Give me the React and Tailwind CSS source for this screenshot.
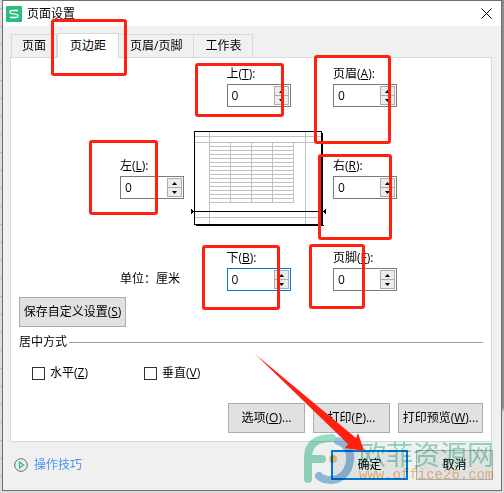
import React from 'react';

/**
 * Single margin field: label with access key, text box and spin buttons
 */
const MarginField = ({ id, label, accessKey, active = false }) => (
  <div className="w-16 justify-self-center">
    <label htmlFor={id} className="block h-[18px] leading-4 whitespace-nowrap">
      {label}(<u>{accessKey}</u>):
    </label>
    <div className={`flex h-[23px] border bg-white pr-px ${active ? 'border-[#0078d7]' : 'border-[#7a7a7a]'}`}>
      <input id={id} type="text" defaultValue="0" className="w-0 min-w-0 flex-1 pl-1 outline-none" />
      <div className="flex flex-col w-[15px] py-px">
        <button type="button" aria-label="增加" className="flex flex-1 items-center justify-center border border-[#acacac] bg-[#ececec]">
          <svg width="5" height="3" viewBox="0 0 5 3"><path d="M2.5 0 5 3H0z" /></svg>
        </button>
        <button type="button" aria-label="减少" className="flex flex-1 items-center justify-center border border-t-0 border-[#acacac] bg-[#ececec]">
          <svg width="5" height="3" viewBox="0 0 5 3"><path d="M0 0h5L2.5 3z" /></svg>
        </button>
      </div>
    </div>
  </div>
);

const DialogButton = ({ children, className = 'w-[77px]', primary = false }) => (
  <button
    type="button"
    className={`h-[30px] whitespace-nowrap bg-[#e1e1e1] ${primary ? 'border-2 border-[#0078d7]' : 'border border-[#adadad]'} ${className}`}
  >
    {children}
  </button>
);

const CheckOption = ({ id, label, accessKey }) => (
  <div className="flex w-28 items-center gap-[5px]">
    <input id={id} type="checkbox" className="size-[13px] appearance-none border border-[#333] bg-white checked:bg-[#0078d7]" />
    <label htmlFor={id}>{label}(<u>{accessKey}</u>)</label>
  </div>
);

/**
 * Small drawing of a sheet with its margin guides
 */
const PagePreview = () => {
  const rows = Array.from({ length: 16 }, (_, i) => 11 + i * 4);
  const cols = [18, 39, 60, 81, 102];

  return (
    <svg width="135" height="95" viewBox="0 0 135 95" shapeRendering="crispEdges" className="justify-self-center">
      <path d="M5 94.5h128M131.5 2v93" stroke="#000" />
      <rect x="3.5" y="0.5" width="127" height="93" fill="#fff" stroke="#000" />
      <g stroke="#c0c0c0">
        <path d="M4 5.5h126M4 11.5h126M4 86.5h126M18.5 1v92M114.5 1v92" />
        {rows.map((y) => <path key={y} d={`M18 ${y + 0.5}h85`} />)}
        {cols.map((x) => <path key={x} d={`M${x + 0.5} 11v61`} />)}
      </g>
      <path d="M0 80.5h135" stroke="#000" />
      <path d="M0 78h1v1h1v3h-1v1h-1zM135 78h-1v1h-1v3h1v1h1z" />
    </svg>
  );
};

const Watermark = () => (
  <div className="pointer-events-none absolute top-[433px] left-[303px] flex mix-blend-multiply opacity-60">
    <svg width="52" height="52" viewBox="0 0 52 52" fill="none" strokeLinecap="round">
      <path d="M29 5C12 5 5 12 5 25v21M6 26h13" stroke="#4fc79a" strokeWidth="8" />
      <path d="M35 8c9 3 13 11 12 19-1 12-9 20-19 20-5 0-9-1-12-4" stroke="#4a9bd0" strokeWidth="8" />
      <circle cx="30" cy="26" r="4" fill="#f2a13c" />
    </svg>
    <div className="pt-2 pl-1">
      <div className="h-[26px] text-[27px] leading-[28px] whitespace-nowrap text-[#4fc79a]">欧菲资源网</div>
      <div className="font-['Liberation_Mono',monospace] text-[14px] leading-4 text-[#f09a38]">www.office26.com</div>
    </div>
  </div>
);

/** Red marker frames drawn on top of the dialog */
const MARKS = [
  'top-[19px] left-[51px] w-[76px] h-[57px]',
  'top-[63px] left-[195px] w-[89px] h-[54px]',
  'top-[55px] left-[314px] w-[77px] h-[89px]',
  'top-[140px] left-[89px] w-[69px] h-[75px]',
  'top-[154px] left-[318px] w-[74px] h-[86px]',
  'top-[245px] left-[202px] w-[78px] h-[65px]',
  'top-[244px] left-[309px] w-[56px] h-[65px]',
];

const TABS = ['页面', '页边距', '页眉/页脚', '工作表'];

const App = () => {
  return (
    <div className="relative flex min-h-screen bg-[#dcdce0] bg-[repeating-linear-gradient(#dcdce0_0px_8px,#b4b4cc_8px_9px,#dcdce0_9px_18px)] pb-[2px] pl-[2px] font-['Open_Sans','Noto_Sans_CJK_SC',sans-serif] text-[12px] leading-4 text-black">
      <div className="flex flex-1 flex-col border border-[#707070] bg-[#f0f0f0]">
        {/* Title bar */}
        <div className="flex h-[25px] items-center bg-white pr-[9px] pl-[3px]">
          <svg width="16" height="16" viewBox="0 0 16 16" fill="none">
            <rect width="16" height="16" rx="1" fill="#29bd7f" />
            <path d="M12 4.5H5.5Q4 4.5 4 6t1.5 1.7l5 .6Q12 8.500 12 10t-1.500 1.500H4" stroke="#fff" strokeWidth="1.300" />
          </svg>
          <h1 className="flex-1 pl-[5px]">页面设置</h1>
          <button type="button" aria-label="关闭">
            <svg width="11" height="11" viewBox="0 0 11 11" stroke="#000"><path d="m.5.500 10 10M10.500.500l-10 10" /></svg>
          </button>
        </div>

        {/* Tabs */}
        <div role="tablist" className="flex items-end px-2 pt-[7px]">
          {TABS.map((tab) => {
            const active = tab === '页边距';
            return (
              <button
                key={tab}
                type="button"
                role="tab"
                aria-selected={active}
                className={active
                  ? 'relative z-10 -mb-px h-[25px] border border-b-0 border-[#d9d9d9] bg-white px-3 pb-px'
                  : 'h-[23px] border border-b-0 border-[#d9d9d9] px-[10px] not-first:border-l-0 not-first:px-[11px]'}
              >
                {tab}
              </button>
            );
          })}
        </div>

        {/* Margins page */}
        <div role="tabpanel" className="mr-[9px] ml-[7px] border border-[#d9d9d9] bg-white px-2 pt-2 pb-2">
          <div className="grid grid-cols-[64px_149px_64px] items-center gap-y-6 pl-[101px]">
            <div className="col-start-2 grid"><MarginField id="top" label="上" accessKey="T" /></div>
            <MarginField id="header" label="页眉" accessKey="A" />
            <MarginField id="left" label="左" accessKey="L" />
            <PagePreview />
            <MarginField id="right" label="右" accessKey="R" />
            <p className="self-end pb-1 whitespace-nowrap">单位：厘米</p>
            <MarginField id="bottom" label="下" accessKey="B" active />
            <MarginField id="footer" label="页脚" accessKey="F" />
          </div>

          <DialogButton className="mt-[6px] block w-[107px]">保存自定义设置(<u>S</u>)</DialogButton>

          <fieldset className="mt-[7px]">
            <div className="flex items-center gap-[2px]">
              <span>居中方式</span>
              <span className="h-px flex-1 bg-[#a0a0a0]" />
            </div>
            <div className="mt-[15px] flex pl-[13px]">
              <CheckOption id="horizontal" label="水平" accessKey="Z" />
              <CheckOption id="vertical" label="垂直" accessKey="V" />
            </div>
          </fieldset>

          <div className="mt-[22px] flex justify-end gap-2">
            <DialogButton>选项(<u>O</u>)...</DialogButton>
            <DialogButton>打印(<u>P</u>)...</DialogButton>
            <DialogButton className="w-[85px]">打印预览(<u>W</u>)...</DialogButton>
          </div>
        </div>

        {/* Footer */}
        <div className="flex items-center gap-2 pt-2 pr-2 pl-[11px]">
          <a href="#tips" className="mr-auto flex items-center gap-[6px] text-[#4a94f0]">
            <svg width="14" height="14" viewBox="0 0 14 14" fill="none">
              <circle cx="7" cy="7" r="6.300" stroke="#666" />
              <path d="M5.500 4v6L9.500 7z" stroke="#29bd7f" strokeWidth="1.300" />
            </svg>
            操作技巧
          </a>
          <DialogButton primary>确定</DialogButton>
          <DialogButton>取消</DialogButton>
        </div>
      </div>
      <div className="w-[2px] bg-linear-to-b from-[#8c8c8c] from-83% to-[#dcdcdc] to-84%" />

      <Watermark />
      {MARKS.map((mark) => (
        <div key={mark} className={`pointer-events-none absolute rounded-[3px] border-3 border-[#ff2010] ${mark}`} />
      ))}
      <svg width="110" height="98" viewBox="0 0 110 98" className="pointer-events-none absolute top-[354px] left-[255px]">
        <path d="M0 0 101 84l2-5 6 18-19-3 3-4z" fill="#ff2010" />
      </svg>
    </div>
  );
};

export default App;
